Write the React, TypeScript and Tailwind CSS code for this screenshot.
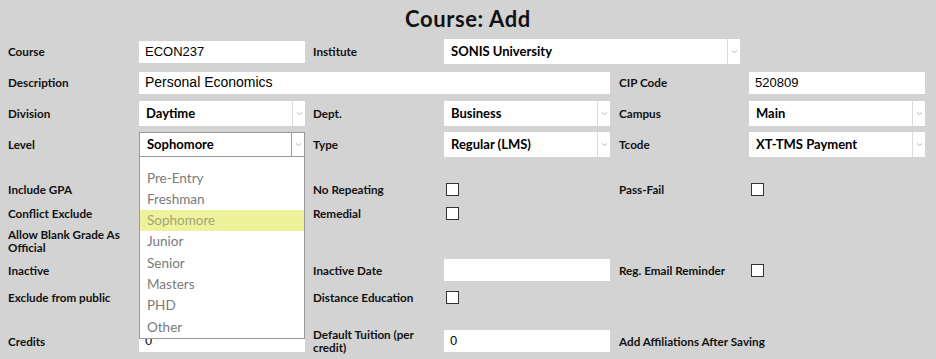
import React from "react";

const gothic = { fontFamily: "Lato, 'Open Sans', sans-serif" };
const arial = { fontFamily: "'Liberation Sans', Arial, sans-serif" };

function Label({ children, wrap }: { children: React.ReactNode; wrap?: boolean }) {
  return (
    <div
      className={
        "flex h-full items-center pr-2 text-[11.7px] font-bold leading-[13px] text-[#111] " +
        (wrap ? "" : "whitespace-nowrap")
      }
      style={gothic}
    >
      <span>{children}</span>
    </div>
  );
}

function Chevron() {
  return (
    <svg width="7" height="5" viewBox="0 0 7 5" className="text-[#b5b5b5]">
      <path d="M1 1.5 L3.5 3.5 L6 1.5" fill="none" stroke="currentColor" strokeWidth="1" />
    </svg>
  );
}

function TextBox({ value, width, size = "text-[13px]" }: { value?: string; width: string; size?: string }) {
  return (
    <div className="flex h-full items-center">
      <div
        className={"flex h-[22px] items-center bg-white px-[6px] text-black " + size + " " + width}
        style={arial}
      >
        {value}
      </div>
    </div>
  );
}

function Select({ value, width, open }: { value: string; width: string; open?: boolean }) {
  return (
    <div className="flex h-full items-center">
      <div
        className={
          "flex h-[25px] items-stretch bg-white " +
          width +
          (open ? " border border-[#9a9a9a]" : "")
        }
      >
        <div
          className="flex flex-1 items-center pl-[7px] text-[13px] font-bold text-black"
          style={gothic}
        >
          {value}
        </div>
        <div
          className={
            "flex w-[13px] items-center justify-center border-l " +
            (open ? "border-[#9a9a9a]" : "border-[#dcdcdc]")
          }
        >
          <Chevron />
        </div>
      </div>
    </div>
  );
}

function Check() {
  return (
    <div className="flex h-full items-center pl-[2px]">
      <div className="h-[13px] w-[13px] border-[1.5px] border-[#333] bg-white" />
    </div>
  );
}

const levels = ["Pre-Entry", "Freshman", "Sophomore", "Junior", "Senior", "Masters", "PHD", "Other"];

export default function App() {
  return (
    <div className="h-[359px] w-[936px] overflow-hidden bg-[#d3d3d3]">
      <h1
        className="flex h-9 items-center justify-center text-[22px] font-bold tracking-[0.6px] text-[#111]"
        style={gothic}
      >
        Course: Add
      </h1>
      <div className="grid grid-cols-[131px_174px_131px_175px_130px_176px] grid-rows-[31px_31px_31px_31px_17px_24px_24px_32px_26px_28px_15px_30px] pl-2">
        {/* row 1 */}
        <Label>Course</Label>
        <TextBox value="ECON237" width="w-[166px]" />
        <Label>Institute</Label>
        <div className="col-span-2">
          <Select value="SONIS University" width="w-[296px]" />
        </div>
        <div />

        {/* row 2 */}
        <Label>Description</Label>
        <div className="col-span-3">
          <TextBox value="Personal Economics" width="w-[471px]" size="text-[14px]" />
        </div>
        <Label>CIP Code</Label>
        <TextBox value="520809" width="w-[176px]" />

        {/* row 3 */}
        <Label>Division</Label>
        <Select value="Daytime" width="w-[166px]" />
        <Label>Dept.</Label>
        <Select value="Business" width="w-[166px]" />
        <Label>Campus</Label>
        <Select value="Main" width="w-[176px]" />

        {/* row 4 */}
        <Label>Level</Label>
        <div className="relative z-10">
          <Select value="Sophomore" width="w-[166px]" open />
          <ul
            className="absolute left-0 top-[28px] w-[166px] border border-t-0 border-[#9a9a9a] bg-white pb-[1px] pt-[10px] text-[13.5px] text-[#7a7a7a]"
            style={gothic}
          >
            {levels.map((l) => (
              <li
                key={l}
                className={
                  "flex h-[21.3px] items-center pl-[7px] " +
                  (l === "Sophomore" ? "bg-[#eef39b] text-[#a3a37c]" : "")
                }
              >
                {l}
              </li>
            ))}
          </ul>
        </div>
        <Label>Type</Label>
        <Select value="Regular (LMS)" width="w-[166px]" />
        <Label>Tcode</Label>
        <Select value="XT-TMS Payment" width="w-[176px]" />

        {/* spacer */}
        <div className="col-span-6" />

        {/* row 6 */}
        <Label>Include GPA</Label>
        <div />
        <Label>No Repeating</Label>
        <Check />
        <Label>Pass-Fail</Label>
        <Check />

        {/* row 7 */}
        <Label>Conflict Exclude</Label>
        <div />
        <Label>Remedial</Label>
        <Check />
        <div />
        <div />

        {/* row 8 */}
        <Label wrap>Allow Blank Grade As Official</Label>
        <div className="col-span-5" />

        {/* row 9 */}
        <Label>Inactive</Label>
        <div />
        <Label>Inactive Date</Label>
        <TextBox width="w-[166px]" />
        <Label>Reg. Email Reminder</Label>
        <Check />

        {/* row 10 */}
        <Label>Exclude from public</Label>
        <div />
        <Label>Distance Education</Label>
        <Check />
        <div />
        <div />

        {/* spacer */}
        <div className="col-span-6" />

        {/* row 12 */}
        <Label>Credits</Label>
        <TextBox value="0" width="w-[166px]" />
        <Label wrap>Default Tuition (per credit)</Label>
        <TextBox value="0" width="w-[166px]" />
        <div className="col-span-2">
          <Label>Add Affiliations After Saving</Label>
        </div>
      </div>
    </div>
  );
}
